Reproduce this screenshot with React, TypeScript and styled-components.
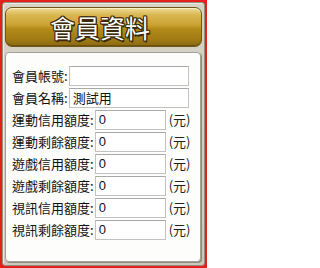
import React from "react";
import styled, { createGlobalStyle } from "styled-components";

const Global = createGlobalStyle`
  html, body { margin: 0; padding: 0; background: #ffffff; }
  body { font-family: "Noto Sans CJK TC", "Noto Sans", sans-serif; }
  * { box-sizing: border-box; }
`;

const Outer = styled.div`
  width: 207px;
  height: 268px;
  border: 2px solid #e3201b;
  background: #e3201b;
`;

const Frame = styled.div`
  height: 100%;
  display: flex;
  flex-direction: column;
  gap: 5px;
  padding: 4px 2px 2px 2px;
  background: linear-gradient(#d6d2c5, #cdc8bb);
  border: 1px solid #958f81;
  border-radius: 3px;
  box-shadow: inset 1px 1px 0 #ece9e1;
`;

const Header = styled.div`
  height: 40px;
  flex: none;
  display: flex;
  align-items: center;
  justify-content: center;
  padding-right: 7px;
  border: 1px solid #6f5718;
  border-radius: 7px;
  background: linear-gradient(
    to bottom,
    #efdc98 0%,
    #d9b852 18%,
    #c9a231 45%,
    #b38a1a 55%,
    #a37d15 80%,
    #8a6912 100%
  );
  box-shadow: inset 0 1px 0 rgba(255, 250, 220, 0.7), inset 0 -1px 0 rgba(60, 40, 0, 0.35);
`;

const Title = styled.div`
  font-family: "Noto Sans CJK TC", "Noto Sans", sans-serif;
  font-weight: 400;
  font-size: 25px;
  line-height: 27px;
  color: #ffffff;
  margin-top: 1px;
  text-shadow:
    -1px -1px 0 #3b2a0c,
    1px -1px 0 #3b2a0c,
    -1px 1px 0 #3b2a0c,
    1px 1px 0 #3b2a0c,
    0 -1px 0 #3b2a0c,
    0 1px 0 #3b2a0c,
    -1px 0 0 #3b2a0c,
    1px 0 0 #3b2a0c,
    1px 2px 0 #3b2a0c;
`;

const Panel = styled.div`
  flex: 1;
  margin-right: 1px;
  margin-bottom: 1px;
  background: #fdfdfb;
  border: 1px solid #a3a099;
  border-radius: 4px;
  box-shadow: 1px 1px 0 #8d8a82;
  padding: 13px 6px 0 6px;
  display: flex;
  flex-direction: column;
  gap: 2px;
`;

const Row = styled.div`
  display: flex;
  align-items: center;
  height: 20px;
  gap: 1px;
`;

const Label = styled.span`
  font-size: 13px;
  line-height: 20px;
  color: #111111;
  white-space: nowrap;
`;

const Field = styled.input<{ $wide?: boolean }>`
  width: ${(p) => (p.$wide ? "120px" : "71px")};
  height: 20px;
  border: 1px solid #c2c2c2;
  border-top-color: #a9a9a9;
  background: #ffffff;
  padding: 0 2px 2px 3px;
  margin: 0;
  font-family: "Liberation Sans", "Noto Sans CJK TC", sans-serif;
  font-size: 13px;
  line-height: 17px;
  color: #111111;
  outline: none;
`;

const Unit = styled.span`
  margin-left: 2px;
  font-size: 13px;
  line-height: 20px;
  color: #222222;
`;

type Item = { label: string; value: string; unit?: boolean };

const items: Item[] = [
  { label: "會員帳號:", value: "" },
  { label: "會員名稱:", value: "測試用" },
  { label: "運動信用額度:", value: "0", unit: true },
  { label: "運動剩餘額度:", value: "0", unit: true },
  { label: "遊戲信用額度:", value: "0", unit: true },
  { label: "遊戲剩餘額度:", value: "0", unit: true },
  { label: "視訊信用額度:", value: "0", unit: true },
  { label: "視訊剩餘額度:", value: "0", unit: true },
];

export default function App() {
  return (
    <>
      <Global />
      <Outer>
        <Frame>
          <Header>
            <Title>會員資料</Title>
          </Header>
          <Panel>
            {items.map((it) => (
              <Row key={it.label}>
                <Label>{it.label}</Label>
                <Field $wide={!it.unit} defaultValue={it.value} readOnly />
                {it.unit && <Unit>(元)</Unit>}
              </Row>
            ))}
          </Panel>
        </Frame>
      </Outer>
    </>
  );
}
